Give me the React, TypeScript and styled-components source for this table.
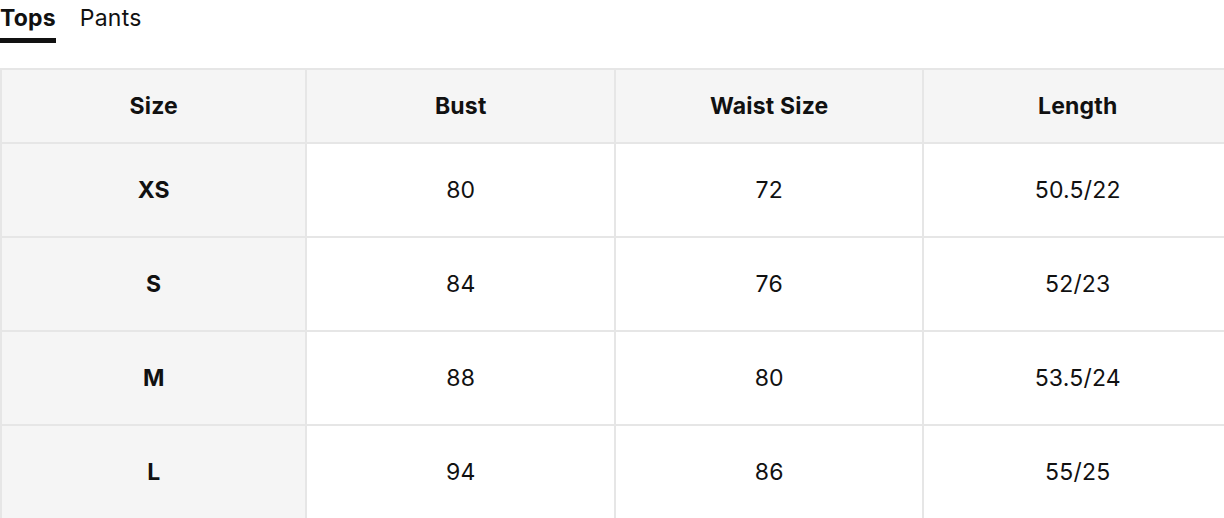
import React, { useState } from 'react';
import styled, { createGlobalStyle } from 'styled-components';

const GlobalStyle = createGlobalStyle`
  html, body {
    margin: 0;
    padding: 0;
    background: #fff;
    overflow: hidden;
  }
  body {
    font-family: Inter, "Noto Sans", "Liberation Sans", sans-serif;
    color: #111;
  }
`;

const Page = styled.div`
  width: 1224px;
  overflow: hidden;
`;

const Tabs = styled.div`
  display: flex;
  gap: 24px;
  height: 43px;
`;

const Tab = styled.button<{ $active?: boolean }>`
  font-family: inherit;
  font-size: 23px;
  line-height: 30px;
  letter-spacing: 0.2px;
  font-weight: ${(p) => (p.$active ? 700 : 400)};
  color: #111;
  background: none;
  border: none;
  padding: 3px 0 0;
  margin: 0;
  height: 43px;
  cursor: pointer;
  border-bottom: 5px solid ${(p) => (p.$active ? '#111' : 'transparent')};
  box-sizing: border-box;
  display: flex;
  align-items: flex-start;
`;

const Table = styled.table`
  margin-top: 25px;
  border-collapse: collapse;
  table-layout: fixed;
  width: 1233px;
`;

const Col = styled.col<{ $w: number }>`
  width: ${(p) => p.$w}px;
`;

const Th = styled.th`
  height: 72px;
  background: #f5f5f5;
  border: 2px solid #e6e6e6;
  font-size: 23px;
  letter-spacing: 0.2px;
  font-weight: 700;
  text-align: center;
  padding: 0;
`;

const Td = styled.td<{ $head?: boolean }>`
  height: 92px;
  border: 2px solid #e6e6e6;
  background: ${(p) => (p.$head ? '#f5f5f5' : '#fff')};
  font-size: 23px;
  letter-spacing: 0.2px;
  font-weight: ${(p) => (p.$head ? 700 : 400)};
  text-align: center;
  padding: 0;
`;

const columns = ['Size', 'Bust', 'Waist Size', 'Length'];
const widths = [305, 308, 308, 308];

const rows = [
  ['XS', '80', '72', '50.5/22'],
  ['S', '84', '76', '52/23'],
  ['M', '88', '80', '53.5/24'],
  ['L', '94', '86', '55/25'],
];

export default function App() {
  const [tab, setTab] = useState('Tops');
  return (
    <Page>
      <GlobalStyle />
      <Tabs>
        {['Tops', 'Pants'].map((t) => (
          <Tab key={t} $active={tab === t} onClick={() => setTab(t)}>
            {t}
          </Tab>
        ))}
      </Tabs>
      <Table>
        <colgroup>
          {widths.map((w, i) => (
            <Col key={i} $w={w} />
          ))}
        </colgroup>
        <thead>
          <tr>
            {columns.map((c) => (
              <Th key={c}>{c}</Th>
            ))}
          </tr>
        </thead>
        <tbody>
          {rows.map((r) => (
            <tr key={r[0]}>
              {r.map((v, i) => (
                <Td key={i} $head={i === 0}>
                  {v}
                </Td>
              ))}
            </tr>
          ))}
        </tbody>
      </Table>
    </Page>
  );
}
